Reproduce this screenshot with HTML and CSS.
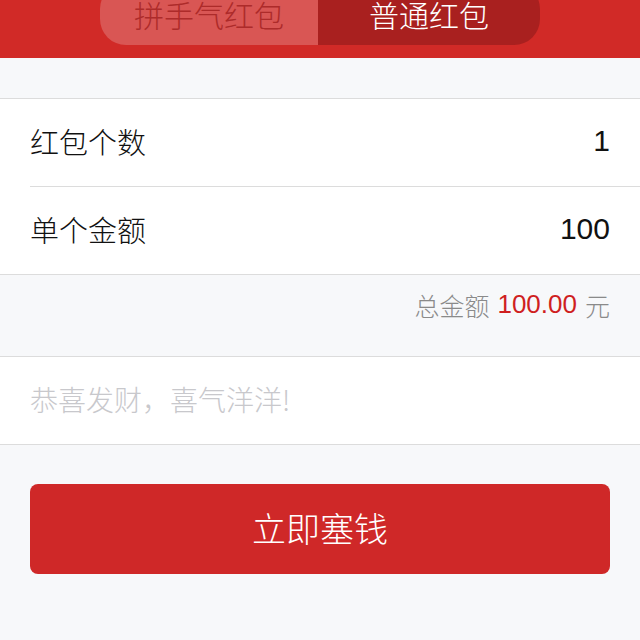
FILE: index.html
```html
<!DOCTYPE html>
<html lang="zh">
<head>
<meta charset="utf-8">
<title>发红包</title>
<link rel="stylesheet" href="styles.css">
</head>
<body>
<header class="header">
  <div class="segment">
    <div class="seg-item seg-off">拼手气红包</div>
    <div class="seg-item seg-on">普通红包</div>
  </div>
</header>
<main class="content">
  <section class="group">
    <div class="row row-inset">
      <span class="label">红包个数</span>
      <span class="value">1</span>
    </div>
    <div class="row">
      <span class="label">单个金额</span>
      <span class="value">100</span>
    </div>
  </section>
  <div class="total">
    <span class="total-label">总金额</span>
    <span class="total-num">100.00</span>
    <span class="total-unit">元</span>
  </div>
  <section class="group">
    <div class="row">
      <span class="placeholder">恭喜发财，喜气洋洋!</span>
    </div>
  </section>
  <div class="action">
    <button class="btn">立即塞钱</button>
  </div>
</main>
</body>
</html>
```
FILE: styles.css
```css
html, body {
  margin: 0;
  padding: 0;
  background: #f7f8fa;
  font-family: "Noto Sans CJK SC", "Noto Sans", sans-serif;
  font-weight: 300;
}
.header {
  height: 58px;
  background: #d12a27;
  display: flex;
  justify-content: center;
  overflow: hidden;
}
.segment {
  width: 440px;
  height: 62px;
  margin-top: -17px;
  display: flex;
  border-radius: 26px;
  overflow: hidden;
}
.seg-item {
  display: flex;
  align-items: center;
  justify-content: center;
  font-size: 30px;
}
.seg-off {
  width: 218px;
  background: #d95654;
  color: #ad2b2a;
}
.seg-on {
  flex: 1;
  background: #a9201f;
  color: #ffffff;
}
.content {
  padding-top: 40px;
}
.group {
  background: #ffffff;
  border-top: 1px solid #dcdcdc;
  border-bottom: 1px solid #dcdcdc;
}
.row {
  height: 87px;
  display: flex;
  align-items: center;
  justify-content: space-between;
  padding: 0 30px 4px;
  box-sizing: border-box;
}
.row-inset {
  height: 88px;
  margin-left: 30px;
  padding-left: 0;
  border-bottom: 1px solid #dcdcdc;
}
.label {
  font-size: 29px;
  color: #111111;
}
.value {
  font-family: "Liberation Sans", sans-serif;
  font-weight: 400;
  font-size: 30px;
  color: #111111;
}
.total {
  height: 81px;
  display: flex;
  align-items: center;
  justify-content: flex-end;
  padding: 0 30px 22px;
  box-sizing: border-box;
  font-size: 25px;
  color: #8a8a8a;
  gap: 8px;
}
.total-num {
  font-family: "Liberation Sans", sans-serif;
  font-weight: 400;
  font-size: 26px;
  color: #cf1f1f;
}
.placeholder {
  font-size: 28px;
  color: #c8c8cc;
}
.action {
  padding: 39px 30px 0;
}
.btn {
  width: 100%;
  height: 90px;
  border: none;
  border-radius: 8px;
  background: #cf2828;
  color: #ffffff;
  font-family: "Noto Sans CJK SC", sans-serif;
  font-weight: 300;
  font-size: 34px;
  padding: 0 0 4px;
}
```
